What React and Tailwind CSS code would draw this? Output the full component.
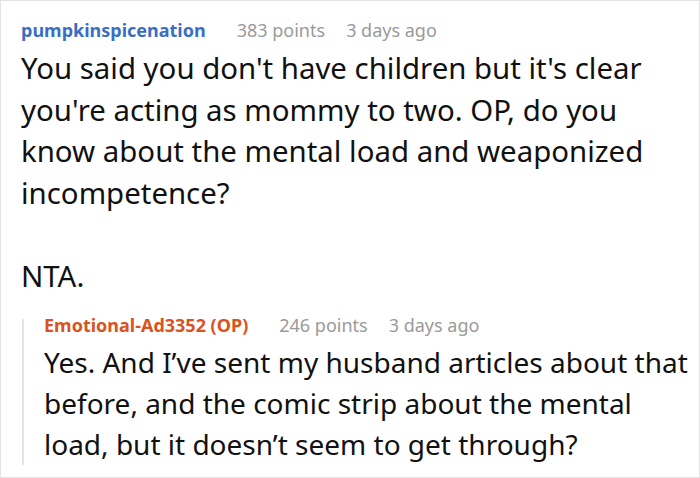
function Meta({ name, nameClass, points, time, lead }) {
  return (
    <div className={"flex items-baseline text-[18px] " + lead}>
      <span className={"font-bold " + nameClass}>{name}</span>
      <span className="ml-[31px] text-[#9a9a9a]">{points}</span>
      <span className="ml-[21px] text-[#9a9a9a]">{time}</span>
    </div>
  )
}

export default function App() {
  return (
    <div
      className="w-[700px] h-[478px] overflow-hidden bg-white border border-[#e3e3e3] pl-[20px] pr-[10px] pt-[17px]"
      style={{ fontFamily: '"Noto Sans", "Open Sans", sans-serif' }}
    >
      <Meta
        name="pumpkinspicenation"
        nameClass="text-[#3b6ec2]"
        points="383 points"
        time="3 days ago"
        lead="leading-[24px]"
      />

      <div className="mt-[6px] text-[29.4px] leading-[41.5px] text-[#111111]">
        <p>
          You said you don't have children but it's clear you're acting as mommy to two. OP, do you
          know about the mental load and weaponized incompetence?
        </p>
        <p className="mt-[41.5px]">NTA.</p>
      </div>

      <div className="mt-[22px] ml-px border-l-2 border-[#e4e4e4] pl-[20px]">
        <Meta
          name="Emotional-Ad3352 (OP)"
          nameClass="text-[#d9531e]"
          points="246 points"
          time="3 days ago"
          lead="leading-[12px]"
        />
        <p className="text-[28px] leading-[41px] text-[#111111] mt-[11px]">
          Yes. And I’ve sent my husband articles about that before, and the comic strip about the
          mental load, but it doesn’t seem to get through?
        </p>
      </div>
    </div>
  )
}
